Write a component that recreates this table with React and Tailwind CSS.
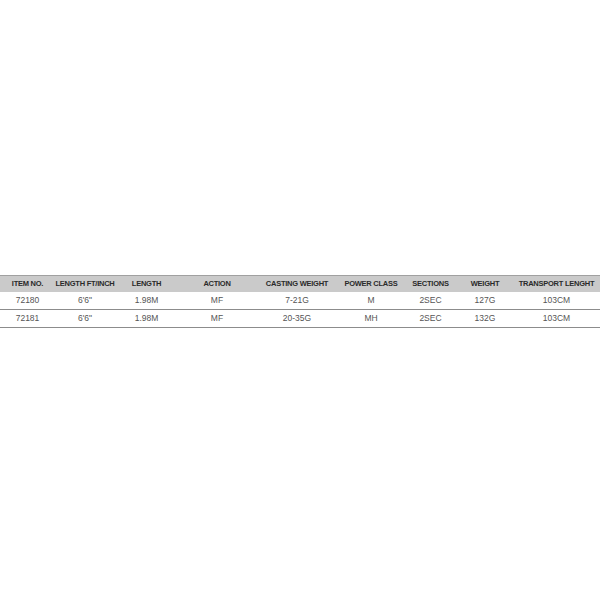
import React from "react";

const cols = [
  { label: "ITEM NO.", w: "w-[55px]" },
  { label: "LENGTH FT/INCH", w: "w-[60px]" },
  { label: "LENGTH", w: "w-[63px]" },
  { label: "ACTION", w: "w-[78px]" },
  { label: "CASTING WEIGHT", w: "w-[82px]" },
  { label: "POWER CLASS", w: "w-[66px]" },
  { label: "SECTIONS", w: "w-[53px]" },
  { label: "WEIGHT", w: "w-[56px]" },
  { label: "TRANSPORT LENGHT", w: "w-[87px]" },
];

const rows = [
  ["72180", "6'6\"", "1.98M", "MF", "7-21G", "M", "2SEC", "127G", "103CM"],
  ["72181", "6'6\"", "1.98M", "MF", "20-35G", "MH", "2SEC", "132G", "103CM"],
];

export default function App() {
  return (
    <div className="flex h-[600px] w-[600px] items-center bg-white pt-[3px] font-['Liberation_Sans_Narrow','Liberation_Sans',Arial,sans-serif]">
      <div className="w-full">
        <div className="flex h-[17px] items-center border-t border-[#a0a0a0] bg-[#cacaca]">
          {cols.map((c) => (
            <div
              key={c.label}
              className={`${c.w} shrink-0 text-center text-[7.5px] font-bold tracking-[-0.25px] text-[#2a2a2a]`}
            >
              {c.label}
            </div>
          ))}
        </div>
        {rows.map((r, i) => (
          <div
            key={i}
            className="flex h-[18px] items-center border-b border-[#8c8c8c]"
          >
            {r.map((v, j) => (
              <div
                key={j}
                className={`${cols[j].w} shrink-0 text-center text-[8.5px] text-[#555]`}
              >
                {v}
              </div>
            ))}
          </div>
        ))}
      </div>
    </div>
  );
}
